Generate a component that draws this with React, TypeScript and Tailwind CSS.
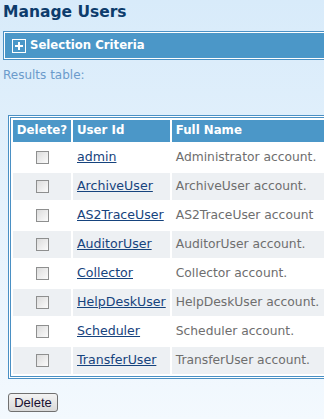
import React from "react";

const users = [
  { id: "admin", name: "Administrator account." },
  { id: "ArchiveUser", name: "ArchiveUser account." },
  { id: "AS2TraceUser", name: "AS2TraceUser account" },
  { id: "AuditorUser", name: "AuditorUser account." },
  { id: "Collector", name: "Collector account." },
  { id: "HelpDeskUser", name: "HelpDeskUser account." },
  { id: "Scheduler", name: "Scheduler account." },
  { id: "TransferUser", name: "TransferUser account." },
];

function Box() {
  return (
    <span className="inline-block w-[13px] h-[13px] border border-[#8e8f8f] bg-gradient-to-br from-[#dcdcdc] to-[#fbfbfb] align-middle" />
  );
}

export default function App() {
  return (
    <div className="w-[324px] h-[419px] overflow-hidden bg-gradient-to-b from-[#d8ebfa] to-[#f3f9fe] font-['DejaVu_Sans',sans-serif]">
      <h1 className="pl-[3px] pt-[2px] text-[15.5px] leading-[20px] font-bold text-[#0d3c6c]">Manage Users</h1>

      <div className="mt-[9px] ml-[3px] w-[360px] border border-[#4a90c4] bg-white p-px">
        <div className="h-[25px] bg-[#4b97c8] flex items-center gap-[4px] pl-[7px]">
          <svg width="14" height="14" viewBox="0 0 14 14">
            <rect x="0.5" y="0.5" width="13" height="13" fill="none" stroke="#fff" />
            <rect x="3" y="6" width="8" height="2" fill="#fff" />
            <rect x="6" y="3" width="2" height="8" fill="#fff" />
          </svg>
          <span className="text-white font-bold text-[11.7px]">Selection Criteria</span>
        </div>
      </div>

      <p className="pl-[3px] mt-[8px] text-[12px] leading-[15px] text-[#6b9bcb]">Results table:</p>

      <table className="mt-[32px] ml-[8px] w-[360px] bg-white border-[3px] border-double border-[#4a90c4] border-separate border-spacing-[2px] text-[11.8px]">
        <thead>
          <tr className="h-[22px] bg-[#4b97c8] text-white font-bold text-left">
            <th className="w-[58px] p-0 text-center">Delete?</th>
            <th className="w-[96px] px-[4px]">User Id</th>
            <th className="px-[4px]">Full Name</th>
          </tr>
        </thead>
        <tbody>
          {users.map((u, i) => (
            <tr key={u.id} className={"h-[27px] " + (i % 2 ? "bg-[#edf0f3]" : "bg-white")}>
              <td className="text-center">
                <Box />
              </td>
              <td className="px-[4px]">
                <a href="#" className="text-[#16437d] underline text-[12.6px]">
                  {u.id}
                </a>
              </td>
              <td className="px-[4px] text-[#6e6e6e] text-[12.3px]">{u.name}</td>
            </tr>
          ))}
        </tbody>
      </table>

      <button className="mt-[14px] ml-[8px] w-[50px] h-[19px] rounded-[3px] border border-[#707070] bg-gradient-to-b from-[#f3f3f3] to-[#d9d9d9] text-[13px] leading-[15px] text-[#1a1030] font-['Liberation_Sans',sans-serif]">
        Delete
      </button>
    </div>
  );
}
